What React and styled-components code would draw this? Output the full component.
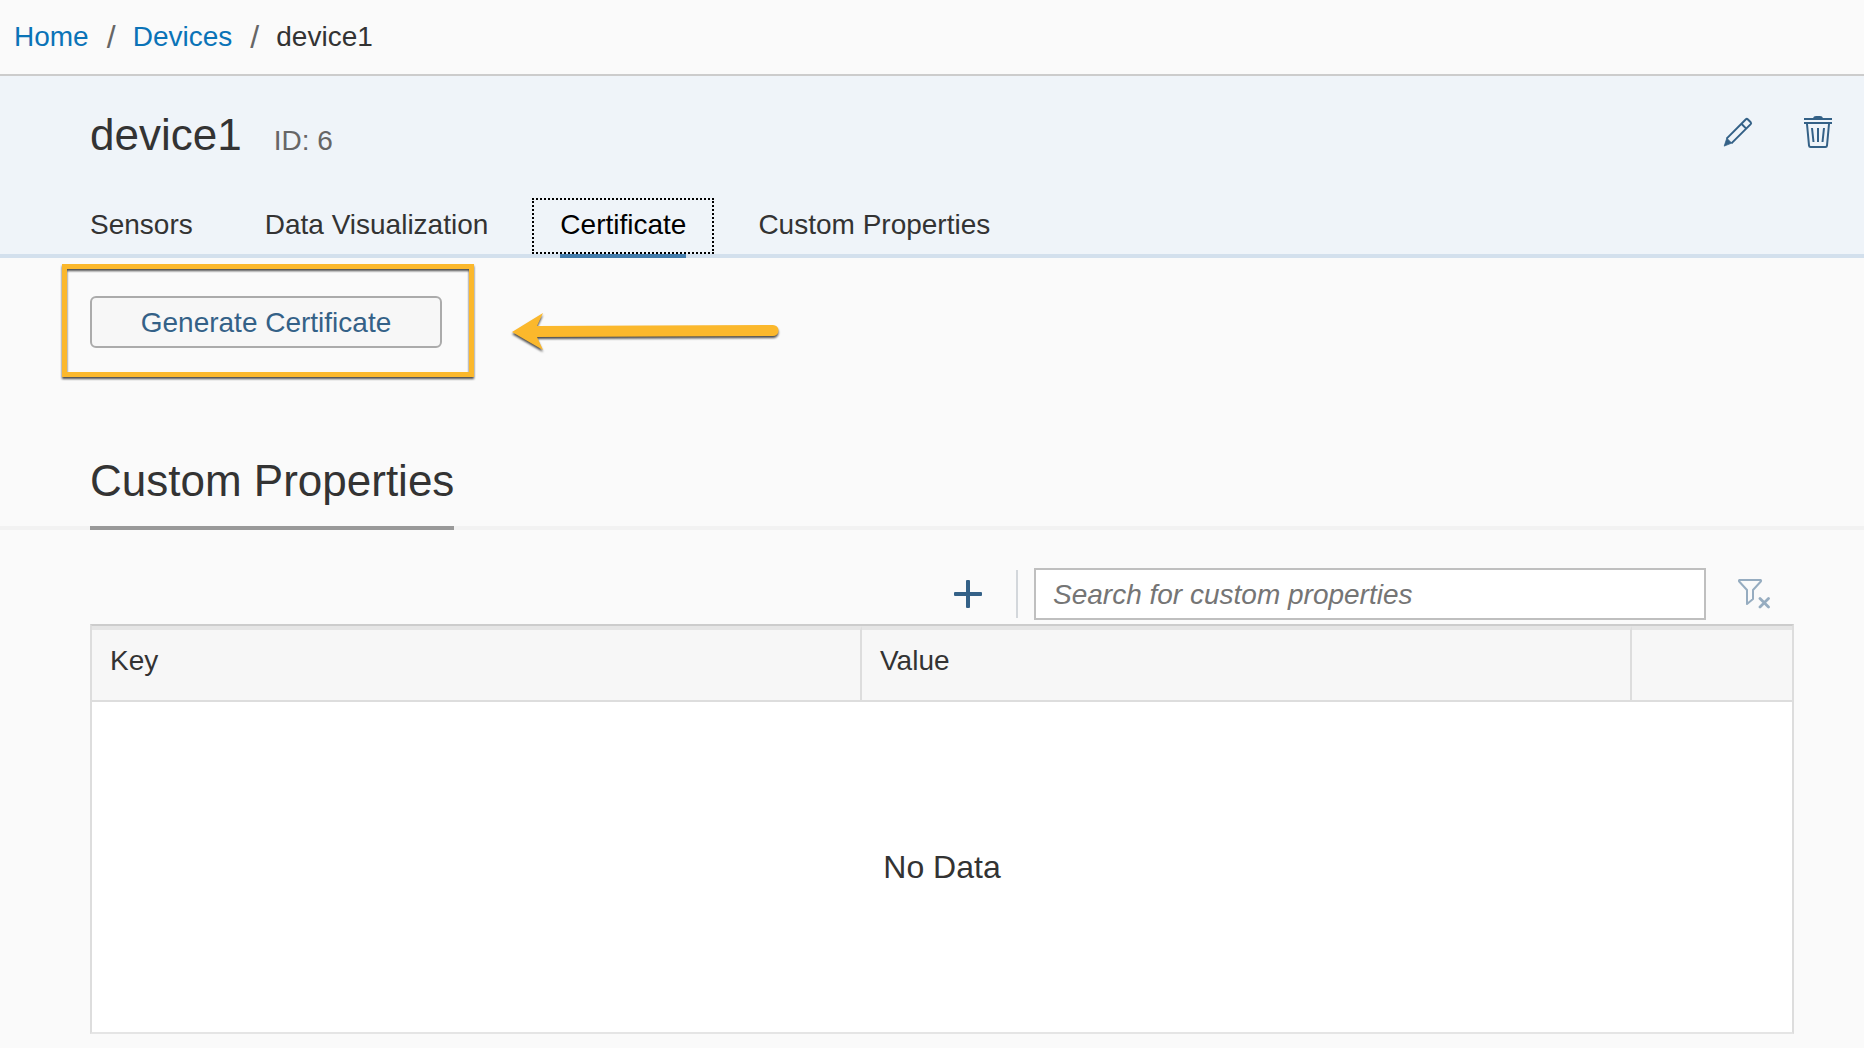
import React from "react";
import styled, { createGlobalStyle } from "styled-components";

const GlobalStyle = createGlobalStyle`
  *, *::before, *::after { box-sizing: border-box; }
  body {
    margin: 0;
    background: #fafafa;
    color: #333;
    font-family: "Liberation Sans", Arial, Helvetica, sans-serif;
    font-size: 28px;
    line-height: 32px;
  }
`;

const Breadcrumbs = styled.nav`
  border-bottom: 2px solid #ccc;
  padding: 21px 14px;
`;

const CrumbList = styled.ol`
  display: flex;
  align-items: center;
  margin: 0;
  padding: 0;
  list-style: none;
`;

const Crumb = styled.li`
  display: flex;
  align-items: center;

  & + &::before {
    content: "/";
    width: 8px;
    margin: 0 18px;
    color: #666;
    font-size: 32px;
  }
`;

const CrumbLink = styled.a`
  color: #0a73b7;
  text-decoration: none;
`;

const Header = styled.header`
  background: #eff4f9;
  border-bottom: 4px solid #d3e0ed;
`;

const TitleBar = styled.div`
  display: flex;
  align-items: center;
  justify-content: space-between;
  padding: 31px 32px 23px 90px;
`;

const TitleGroup = styled.div`
  display: flex;
  align-items: baseline;
  gap: 32px;
`;

const Title = styled.h1`
  margin: 0;
  font-size: 44px;
  font-weight: 400;
  line-height: 56px;
`;

const DeviceId = styled.span`
  color: #666;
`;

const Actions = styled.div`
  display: flex;
  align-items: center;
  gap: 51px;
  padding-bottom: 6px;
`;

const IconButton = styled.button`
  display: flex;
  padding: 0;
  border: 0;
  background: none;
  color: #346187;
  cursor: pointer;

  &:disabled {
    opacity: 0.5;
    cursor: default;
  }
`;

const Tabs = styled.div`
  display: flex;
  gap: 16px;
  padding: 12px 62px 0;
`;

const Tab = styled.button`
  position: relative;
  height: 56px;
  padding: 0 26px 2px;
  border: 2px dotted ${(p) => (p.$selected ? "#000" : "transparent")};
  background: none;
  color: ${(p) => (p.$selected ? "#000" : "#333")};
  font: inherit;
  cursor: pointer;

  &::after {
    content: "";
    display: ${(p) => (p.$selected ? "block" : "none")};
    position: absolute;
    left: 26px;
    right: 26px;
    bottom: -6px;
    height: 4px;
    background: #427cac;
  }
`;

const CertificatePanel = styled.section`
  padding: 38px 90px 94px;
`;

const Callout = styled.div`
  position: relative;
  width: fit-content;
`;

const GenerateButton = styled.button`
  display: block;
  width: 352px;
  height: 52px;
  padding: 2px 0 0;
  border: 2px solid #ababab;
  border-radius: 6px;
  background: #f7f7f7;
  color: #346187;
  font: inherit;
  cursor: pointer;
`;

const Highlight = styled.div`
  position: absolute;
  inset: -32px -32px -29px -28px;
  border: 5px solid #fbb82c;
  filter: drop-shadow(0 2px 1px rgba(0, 0, 0, 0.7));
  pointer-events: none;
`;

const Arrow = styled.svg`
  position: absolute;
  left: 422px;
  top: 17px;
  overflow: visible;
  filter: drop-shadow(0 2px 1px rgba(0, 0, 0, 0.7));
`;

const SectionHeading = styled.div`
  padding: 0 90px;
  box-shadow: inset 0 -4px #f2f2f2;
`;

const SectionTitle = styled.h2`
  width: fit-content;
  margin: 0;
  padding: 13px 0 19px;
  border-bottom: 4px solid #999;
  font-size: 44px;
  font-weight: 400;
  line-height: 52px;
`;

const PropertiesPanel = styled.section`
  padding: 38px 70px 14px 90px;
`;

const Toolbar = styled.div`
  display: flex;
  align-items: center;
  justify-content: flex-end;
  padding: 0 24px 4px 0;
`;

const Separator = styled.span`
  width: 2px;
  height: 48px;
  margin: 0 16px 0 34px;
  background: #d3d7db;
`;

const SearchInput = styled.input`
  flex: 0 1 672px;
  min-width: 0;
  height: 52px;
  margin-right: 32px;
  padding: 2px 17px 0;
  border: 2px solid #bfbfbf;
  border-radius: 0;
  background: #fff;
  color: #333;
  font: inherit;

  &::placeholder {
    color: #757575;
    font-style: italic;
    opacity: 1;
  }
`;

const Table = styled.table`
  width: 100%;
  table-layout: fixed;
  border: 2px solid #ddd;
  border-top-color: #ccc;
  border-bottom-color: #e5e5e5;
  border-collapse: separate;
  border-spacing: 0;
`;

const HeadCell = styled.th`
  width: ${(p) => p.$width || "auto"};
  height: 76px;
  padding: 15px 18px;
  border-top: 4px solid #e5e5e5;
  border-right: ${(p) => (p.$last ? "0" : "2px solid #ddd")};
  border-bottom: 2px solid #ddd;
  background: #f7f7f7;
  font-weight: 400;
  text-align: left;
  vertical-align: top;
`;

const EmptyCell = styled.td`
  height: 330px;
  padding: 0;
  background: #fff;
  font-size: 32px;
  text-align: center;
`;

const TABS = ["Sensors", "Data Visualization", "Certificate", "Custom Properties"];

function PencilIcon() {
  return (
    <svg width="30" height="30" viewBox="0 0 30 30" fill="none" aria-hidden="true">
      <path d="M3.6 21.6 22.9 2.3q.9-.8 1.8 0l3 3q.8.9 0 1.8L8.4 26.4" stroke="currentColor" strokeWidth="2" />
      <path d="m18.4 6.8 4.8 4.8" stroke="currentColor" strokeWidth="2" />
      <path d="m3.8 21.2 4.9 4.9-7.5 3Z" fill="currentColor" stroke="currentColor" strokeWidth=".8" strokeLinejoin="round" />
    </svg>
  );
}

function TrashIcon() {
  return (
    <svg width="28" height="32" viewBox="0 0 28 32" fill="none" stroke="currentColor" strokeWidth="2" aria-hidden="true">
      <path d="M9 2.3Q9.5 0 12 0h4q2.500 0 3 2.300Z" fill="currentColor" stroke="none" />
      <path d="M0 3h28M0 7h28" />
      <path d="m3 8 2 21.500q.2 1.500 1.500 1.500h15q1.300 0 1.500-1.500L25 8" />
      <path d="m8 12 1.500 14M14 12v14M20 12l-1.500 14" />
    </svg>
  );
}

function PlusIcon() {
  return (
    <svg width="28" height="28" viewBox="0 0 28 28" fill="currentColor" aria-hidden="true">
      <rect x="12" width="4" height="28" rx="1" />
      <rect y="12" width="28" height="4" rx="1" />
    </svg>
  );
}

function ClearFilterIcon() {
  return (
    <svg width="32" height="30" viewBox="0 0 32 30" fill="none" stroke="currentColor" strokeWidth="2" aria-hidden="true">
      <path d="M1.500 1h21q1 .4.300 1.500L15 11v9L9 25V11L1.200 2.500Q.6 1.400 1.500 1Z" strokeLinejoin="round" />
      <path d="m22 19.500 8.500 8.500M30.500 19.500 22 28" strokeWidth="2.800" strokeLinecap="round" />
    </svg>
  );
}

export default function App() {
  return (
    <>
      <GlobalStyle />
      <Breadcrumbs aria-label="Breadcrumb">
        <CrumbList>
          <Crumb><CrumbLink href="#home">Home</CrumbLink></Crumb>
          <Crumb><CrumbLink href="#devices">Devices</CrumbLink></Crumb>
          <Crumb aria-current="page">device1</Crumb>
        </CrumbList>
      </Breadcrumbs>
      <Header>
        <TitleBar>
          <TitleGroup>
            <Title>device1</Title>
            <DeviceId>ID: 6</DeviceId>
          </TitleGroup>
          <Actions>
            <IconButton type="button" aria-label="Edit device"><PencilIcon /></IconButton>
            <IconButton type="button" aria-label="Delete device"><TrashIcon /></IconButton>
          </Actions>
        </TitleBar>
        <Tabs role="tablist">
          {TABS.map((name) => (
            <Tab key={name} type="button" role="tab" aria-selected={name === "Certificate"} $selected={name === "Certificate"}>
              {name}
            </Tab>
          ))}
        </Tabs>
      </Header>
      <main>
        <CertificatePanel>
          <Callout>
            <GenerateButton type="button">Generate Certificate</GenerateButton>
            <Highlight />
            <Arrow width="268" height="38" viewBox="0 0 268 38" fill="#fbb82c" aria-hidden="true">
              <path d="M0 19 31 0 25 13 261 12a5.500 5.500 0 0 1 0 11L25 24 31 37Z" />
            </Arrow>
          </Callout>
        </CertificatePanel>
        <SectionHeading>
          <SectionTitle>Custom Properties</SectionTitle>
        </SectionHeading>
        <PropertiesPanel>
          <Toolbar>
            <IconButton type="button" aria-label="Add custom property"><PlusIcon /></IconButton>
            <Separator />
            <SearchInput type="search" aria-label="Search for custom properties" placeholder="Search for custom properties" />
            <IconButton type="button" aria-label="Clear filter" disabled><ClearFilterIcon /></IconButton>
          </Toolbar>
          <Table>
            <thead>
              <tr>
                <HeadCell scope="col">Key</HeadCell>
                <HeadCell scope="col">Value</HeadCell>
                <HeadCell scope="col" $width="160px" $last aria-label="Actions" />
              </tr>
            </thead>
            <tbody>
              <tr>
                <EmptyCell colSpan={3}>No Data</EmptyCell>
              </tr>
            </tbody>
          </Table>
        </PropertiesPanel>
      </main>
    </>
  );
}
